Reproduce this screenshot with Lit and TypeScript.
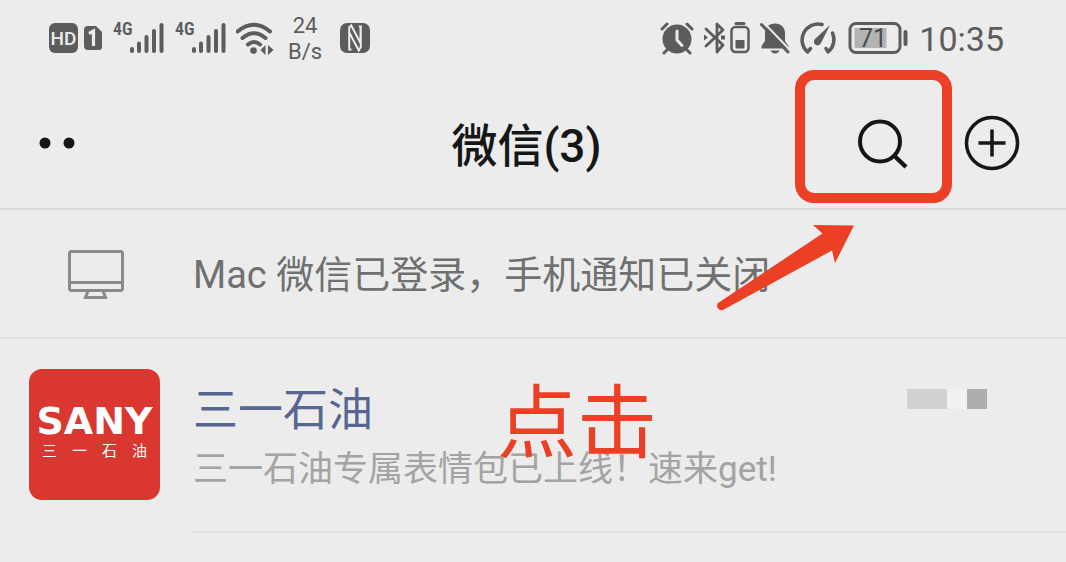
import { LitElement, html, css, svg } from "lit";
import { customElement } from "lit/decorators.js";

const signal = () => html`
  <svg width="52" height="44" viewBox="0 -5 52 44" role="img" aria-label="4G">
    <text x="1" y="14" class="net">4G</text>
    ${[
      [20, 28],
      [27, 22.5],
      [34.5, 16],
      [42, 10],
      [49.5, 4],
    ].map(
      ([x, y]) => svg`<line x1=${x} x2=${x} y1=${y} y2="30" stroke="currentColor" stroke-width="4" stroke-linecap="round"/>`
    )}
  </svg>
`;

@customElement("status-bar")
export class StatusBar extends LitElement {
  static styles = css`
    :host {
      display: flex;
      justify-content: space-between;
      align-items: center;
      height: 76px;
      padding: 0 62px 0 48px;
      color: #5c5c5c;
      font-family: Roboto, "Noto Sans CJK SC", sans-serif;
    }
    .group {
      display: flex;
      align-items: center;
      gap: 10px;
    }
    .tight {
      display: flex;
      align-items: center;
      gap: 4px;
    }
    svg {
      display: block;
      flex: none;
    }
    .hd {
      font-size: 19px;
      font-weight: 500;
      fill: #ececec;
    }
    .net {
      font-size: 18px;
      font-weight: 600;
      font-family: "Roboto Condensed", Roboto, sans-serif;
      fill: currentColor;
    }
    .rate {
      font-size: 22px;
      line-height: 26px;
      text-align: center;
      padding: 2px 8px 0 2px;
    }
    .level {
      font-size: 25px;
      fill: #4c4c4c;
    }
    .time {
      font-size: 34px;
      line-height: 40px;
      padding-top: 2px;
    }
  `;

  render() {
    return html`
      <div class="group">
        <div class="tight">
          <svg width="32" height="32" viewBox="0 0 32 32">
            <rect x="1" y="1" width="29" height="30" rx="6" fill="currentColor" />
            <text x="15.5" y="23" text-anchor="middle" class="hd">HD</text>
          </svg>
          <svg width="18" height="26" viewBox="0 0 18 26">
            <path d="M4 1h8l6 6v15a3 3 0 0 1-3 3H4a4 4 0 0 1-4-4V5a4 4 0 0 1 4-4z" fill="currentColor" />
            <path d="M5 8.500L9.500 6v15" fill="none" stroke="#ececec" stroke-width="3.200" />
          </svg>
        </div>
        ${signal()} ${signal()}
        <svg width="40" height="34" viewBox="0 0 40 34">
          <g fill="none" stroke="currentColor" stroke-width="4" stroke-linecap="round">
            <path d="M1.500 10.500Q18 -3 34 10.500" />
            <path d="M6.500 17Q18 7.500 29.500 17" />
            <path d="M12 23.500Q18 18.500 24 23.500" />
          </g>
          <circle cx="17.500" cy="29.500" r="3.300" fill="currentColor" />
          <path d="M29.500 24v10l-5-5zM32 24v10l5.500-5z" fill="currentColor" />
        </svg>
        <div class="rate">24<br />B/s</div>
        <svg width="30" height="32" viewBox="0 0 30 32">
          <rect y="1" width="30" height="30" rx="7" fill="currentColor" />
          <path d="M11.500 27.500H9.200V5.500l2-2L20.500 21V6M18.800 4.500h2V25l-2 3.500L9.500 11" fill="none" stroke="#ececec" stroke-width="2" />
        </svg>
      </div>
      <div class="group">
        <svg width="34" height="34" viewBox="0 0 34 34">
          <circle cx="17" cy="18" r="14.500" fill="currentColor" />
          <path d="M2 8l5-5M27 3l5 5M8 28l-4 4M26 28l4 4" stroke="currentColor" stroke-width="3" stroke-linecap="round" />
          <path d="M17 10v9l5 5.500" fill="none" stroke="#ececec" stroke-width="3" stroke-linecap="round" />
        </svg>
        <div class="tight">
          <svg width="22" height="34" viewBox="0 0 22 34">
            <path d="M2 8l17 16-6 7V3l6 6L2 25" fill="none" stroke="currentColor" stroke-width="2.800" stroke-linejoin="round" stroke-linecap="round" />
            <path d="M0 13.500l4 3-4 3zM17 14.500h4v4h-4z" fill="currentColor" />
          </svg>
          <svg width="20" height="34" viewBox="0 0 20 34">
            <path d="M6 2.500h8" stroke="currentColor" stroke-width="3" stroke-linecap="round" />
            <rect x="1.500" y="6" width="17" height="25" rx="4" fill="none" stroke="currentColor" stroke-width="2.500" />
            <rect x="5.500" y="19" width="9" height="8.500" rx="1" fill="currentColor" />
          </svg>
        </div>
        <svg width="30" height="34" viewBox="0 0 30 34">
          <path d="M15 2.500c-6 0-10 4-10 9.500v8L1.500 25v2.500h27V25L25 20v-8c0-5.500-4-9.500-10-9.500zM10.500 29.500h9q-1.500 3-4.500 3t-4.500-3z" fill="currentColor" />
          <path d="M3.500 1.500l27 28" stroke="#ececec" stroke-width="2" />
          <path d="M1.500 3.500L28 31" stroke="currentColor" stroke-width="3" stroke-linecap="round" />
        </svg>
        <svg width="38" height="34" viewBox="0 0 38 34">
          <g fill="none" stroke="currentColor" stroke-width="3.500" stroke-linecap="round" stroke-linejoin="round">
            <path d="M22 3.500A16 16 0 0 0 7.500 31L10.500 27.500" />
            <path d="M32.500 12A16 16 0 0 1 28 31L26 27.500" />
          </g>
          <path d="M30 4L21 22a3.700 3.700 0 1 1-5.500-4.500z" fill="currentColor" />
        </svg>
        <svg width="61" height="34" viewBox="0 0 61 34">
          <rect x="2" y="2.500" width="50" height="29" rx="6" fill="none" stroke="currentColor" stroke-width="3" />
          <rect x="6.500" y="7" width="32" height="20" fill="#b4b4b4" />
          <text x="25" y="26" text-anchor="middle" class="level">71</text>
          <path d="M57.500 11v12" stroke="currentColor" stroke-width="4" stroke-linecap="round" />
        </svg>
        <div class="time">10:35</div>
      </div>
    `;
  }
}

@customElement("app-root")
export class AppRoot extends LitElement {
  static styles = css`
    :host {
      display: block;
      position: relative;
      min-height: 100vh;
      overflow: hidden;
      background: #ececec;
      font-family: Roboto, "Noto Sans CJK SC", sans-serif;
    }
    svg {
      display: block;
      flex: none;
    }
    button {
      border: 0;
      background: none;
      padding: 0;
      color: #161616;
      cursor: pointer;
    }
    .header {
      display: grid;
      grid-template-columns: 1fr auto 1fr;
      align-items: center;
      height: 130px;
      padding: 2px 46px 0 33px;
      border-bottom: 2px solid #dadada;
    }
    .title {
      margin: 0;
      padding-top: 6px;
      font-size: 46px;
      font-weight: 500;
      line-height: 64px;
      color: #161616;
    }
    .more {
      justify-self: start;
      padding: 6px;
    }
    .actions {
      display: flex;
      justify-content: flex-end;
      align-items: center;
      gap: 55px;
    }
    .device {
      display: grid;
      grid-template-columns: 126px 1fr;
      align-items: center;
      height: 127px;
      padding-left: 67px;
      border-bottom: 2px solid #dedede;
      color: #8a8a8a;
    }
    .notice {
      margin: 0;
      padding-top: 2px;
      font-size: 38px;
      line-height: 56px;
      color: #707070;
    }
    .chat {
      display: flex;
      gap: 33px;
      padding-left: 29px;
      color: inherit;
      text-decoration: none;
    }
    .avatar {
      box-sizing: border-box;
      flex: none;
      width: 131px;
      height: 131px;
      margin-top: 30px;
      padding: 30px 6px 0;
      border-radius: 13px;
      background: #d93730;
      color: #fff;
      display: flex;
      flex-direction: column;
      align-items: center;
    }
    .brand {
      font: 700 38px/44px "DejaVu Sans", sans-serif;
    }
    .sub {
      display: flex;
      gap: 15px;
      font-size: 15px;
      line-height: 16px;
    }
    .body {
      flex: 1;
      min-width: 0;
      display: grid;
      grid-template-columns: 1fr auto;
      padding: 40px 79px 34px 0;
      border-bottom: 2px solid #dedede;
    }
    .name {
      margin: 0;
      font-size: 45px;
      font-weight: 400;
      line-height: 64px;
      color: #586591;
    }
    .stamp {
      display: flex;
      height: 20px;
      margin-top: 10px;
    }
    .block {
      width: 20px;
      background: #d1d1d1;
    }
    .pale {
      background: #f1f1f1;
    }
    .dark {
      background: #aeaeae;
    }
    .preview {
      margin: 0;
      grid-column: 1 / -1;
      font-size: 35px;
      line-height: 54px;
      color: #a3a3a3;
    }
    .frame {
      position: absolute;
      top: 70px;
      right: 114px;
      box-sizing: border-box;
      width: 157px;
      height: 133px;
      border: 10px solid #eb4026;
      border-radius: 19px;
      pointer-events: none;
    }
    .arrow {
      position: absolute;
      top: 224px;
      right: 211px;
      pointer-events: none;
    }
    .hint {
      position: absolute;
      top: 374px;
      left: 497px;
      font-size: 80px;
      line-height: 100px;
      color: #eb4026;
      pointer-events: none;
    }
  `;

  render() {
    return html`
      <status-bar></status-bar>
      <header class="header">
        <button class="more" aria-label="更多">
          <svg width="36" height="12" viewBox="0 0 36 12" fill="currentColor">
            <circle cx="6" cy="6" r="5.500" />
            <circle cx="30" cy="6" r="5.500" />
          </svg>
        </button>
        <h1 class="title">微信(3)</h1>
        <div class="actions">
          <button aria-label="搜索">
            <svg width="52" height="56" viewBox="0 0 52 56" fill="none" stroke="currentColor" stroke-width="4">
              <circle cx="23" cy="26.500" r="20" />
              <path d="M37 40.500L49 52" stroke-width="4.500" />
            </svg>
          </button>
          <button aria-label="添加">
            <svg width="56" height="56" viewBox="0 0 56 56" fill="none" stroke="currentColor" stroke-width="3.500">
              <circle cx="28" cy="28" r="25.500" />
              <path d="M28 14.500v27M14.500 28h27" />
            </svg>
          </button>
        </div>
      </header>
      <section class="device">
        <svg width="58" height="50" viewBox="0 0 58 50" fill="none" stroke="currentColor" stroke-width="3">
          <rect x="2.500" y="2.500" width="53" height="39" rx="2" />
          <path d="M2.500 33.500h53M21 42l-2.500 6.500h20L36 42" />
        </svg>
        <p class="notice">Mac 微信已登录，手机通知已关闭</p>
      </section>
      <a class="chat" href="#chat">
        <div class="avatar">
          <span class="brand">SANY</span>
          <span class="sub"><span>三</span><span>一</span><span>石</span><span>油</span></span>
        </div>
        <div class="body">
          <h2 class="name">三一石油</h2>
          <div class="stamp">
            <span class="block"></span><span class="block"></span><span class="block pale"></span><span class="block dark"></span>
          </div>
          <p class="preview">三一石油专属表情包已上线！速来get!</p>
        </div>
      </a>
      <div class="frame"></div>
      <svg class="arrow" width="140" height="88" viewBox="0 0 140 88">
        <path d="M139 1.500L98 1l9.500 8.500L3 79a4.500 4.500 0 0 0 5 7L117 26.500l3 12.500z" fill="#eb4026" />
      </svg>
      <div class="hint">点击</div>
    `;
  }
}
